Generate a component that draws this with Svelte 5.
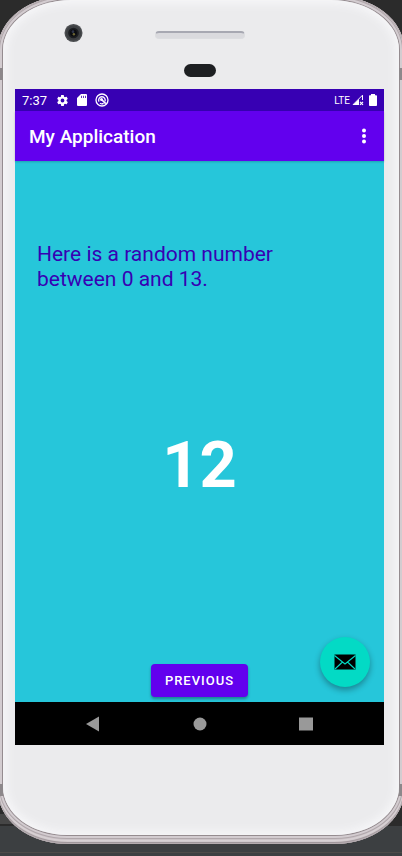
<script>
  const min = 0;
  const max = 13;
  let value = $state(12);

  function reroll() {
    value = min + Math.floor(Math.random() * (max - min + 1));
  }
</script>

<div class="desk">
  <div class="phone">
    <i class="antenna top left"></i>
    <i class="antenna top right"></i>
    <i class="antenna bottom left"></i>
    <i class="antenna bottom right"></i>
    <div class="face">
      <div class="forehead">
        <svg class="camera" viewBox="0 0 20 20" aria-hidden="true">
          <circle cx="10" cy="10" r="9.5" fill="#4b4d50" />
          <circle cx="10" cy="10" r="8" fill="#3d3f42" />
          <circle cx="10" cy="10" r="5.6" fill="#1b1d20" />
          <circle cx="10" cy="10" r="3.6" fill="#0b0c10" />
          <circle cx="9.4" cy="8.6" r="1.4" fill="#2d3348" />
          <circle cx="10.4" cy="11.4" r="1.3" fill="#6c6535" />
        </svg>
        <div class="speaker"></div>
        <div class="sensor"></div>
      </div>

      <div class="screen">
        <div class="status">
          <span class="clock">7:37</span>
          <svg class="gear" viewBox="0 0 24 24" aria-hidden="true">
            <path fill="#fff" fill-rule="evenodd" d="M19.4 13c0-.3.1-.6.1-1s0-.7-.1-1l2.1-1.600c.2-.2.3-.5.1-.7l-2-3.500c-.1-.2-.4-.3-.6-.2l-2.500 1c-.5-.4-1.100-.7-1.700-1l-.4-2.600c0-.3-.2-.4-.5-.4h-4c-.2 0-.4.2-.5.4L9 5c-.6.300-1.200.600-1.700 1L4.900 5c-.2-.1-.5 0-.6.200l-2 3.500c-.1.2-.1.5.1.7L4.500 11c0 .3-.1.700-.1 1s0 .7.100 1l-2.100 1.600c-.2.200-.3.500-.1.700l2 3.500c.1.200.4.300.6.200l2.500-1c.5.400 1.100.700 1.700 1l.4 2.600c0 .3.200.4.500.4h4c.2 0 .4-.2.500-.4L15 19c.6-.3 1.200-.600 1.700-1l2.400 1c.2.100.5 0 .6-.2l2-3.500c.1-.2.100-.5-.1-.7zM12 15.500a3.500 3.500 0 1 1 0-7 3.500 3.500 0 0 1 0 7z" />
          </svg>
          <svg class="card" viewBox="0 0 10 12" aria-hidden="true">
            <path fill="#fff" d="M4 0h5a1 1 0 0 1 1 1v10a1 1 0 0 1-1 1H1a1 1 0 0 1-1-1V4z" />
            <path stroke="#3700b3" stroke-width=".8" d="M4.500 1.800v2.200M6.500 1.800v2.200M8.500 1.800v2.200" />
          </svg>
          <svg class="data" viewBox="0 0 14 14" aria-hidden="true">
            <g fill="none" stroke="#fff">
              <circle cx="7" cy="7" r="6" stroke-width="1.300" />
              <path stroke-width="1.300" d="M4 8.600A3.300 3.300 0 1 1 9.900 8.500M5 10.200a3.300 3.300 0 0 0 3.600.2" />
              <path stroke-width="1.700" d="M6 6l4.800 4.600" />
            </g>
            <circle cx="6.500" cy="6.500" r="1.500" fill="#fff" />
          </svg>
          <span class="network">LTE</span>
          <svg class="signal" viewBox="0 0 12 12" aria-hidden="true">
            <path fill="none" stroke="#fff" d="M6.500 10.500H1.200L10.500 1.200V6" />
            <path fill="#fff" d="M1 11L7 5v6z" />
            <path stroke="#fff" stroke-width="1.200" d="M8 7.800l3 3M11 7.800l-3 3" />
          </svg>
          <svg class="battery" viewBox="0 0 8 12" aria-hidden="true">
            <path fill="#fff" d="M2 0h4v1.300h1.200q.8 0 .8.800v9q0 .9-.8.900H.8Q0 12 0 11.100v-9q0-.8.800-.8H2z" />
          </svg>
        </div>

        <header class="appbar">
          <h1>My Application</h1>
          <button class="more" aria-label="More options">
            <svg viewBox="0 0 6 16" aria-hidden="true">
              <g fill="#fff">
                <circle cx="3" cy="2.500" r="2" />
                <circle cx="3" cy="8" r="2" />
                <circle cx="3" cy="13.500" r="2" />
              </g>
            </svg>
          </button>
        </header>

        <main>
          <p class="message">Here is a random number between {min} and {max}.</p>
          <output class="number">{value}</output>
          <button class="previous">PREVIOUS</button>
          <button class="fab" aria-label="Send mail" onclick={reroll}>
            <svg viewBox="0 0 22 16" aria-hidden="true">
              <rect x=".5" y=".5" width="21" height="15" fill="#000" />
              <path fill="none" stroke="#03dac5" stroke-width="1.100" d="M.5 1.500L8.500 8 11 10l2.500-2L21.500 1.500M1 15l7.500-7M21 15l-7.500-7" />
            </svg>
          </button>
        </main>

        <nav>
          <button aria-label="Back">
            <svg viewBox="0 0 16 16" aria-hidden="true"><path fill="#999" d="M1 8L14 .5v15z" /></svg>
          </button>
          <button aria-label="Home">
            <svg viewBox="0 0 16 16" aria-hidden="true"><circle cx="8" cy="8" r="6.500" fill="#999" /></svg>
          </button>
          <button aria-label="Recent apps">
            <svg viewBox="0 0 16 16" aria-hidden="true"><path fill="#999" d="M1 1.500h14v13H1z" /></svg>
          </button>
        </nav>
      </div>
    </div>
  </div>
</div>

<style>
  :global(body) {
    margin: 0;
    background: #3c3f41;
  }

  .desk {
    box-sizing: border-box;
    display: flex;
    flex-direction: column;
    min-height: 100vh;
    padding-bottom: 12px;
    overflow: hidden;
    font-family: Roboto, "Liberation Sans", sans-serif;
    background:
      linear-gradient(#4d4a48, #4d4a48) 0 calc(100% - 3px) / 100% 1px no-repeat,
      linear-gradient(#3c3f41, #3c3f41) 0 100% / 100% 30px no-repeat,
      linear-gradient(#464646, #464646) 0 calc(100% - 32px) / 50% 10px no-repeat,
      #2b2b2b;
  }

  .phone {
    position: relative;
    box-sizing: border-box;
    display: flex;
    flex: 1;
    margin: -4px -2px 0;
    padding: 4px 5px 9px;
    border-radius: 70px / 53px;
    background: #cbc3c7;
    box-shadow:
      inset 0 0 0 1px #b5acb0,
      inset 0 -2px 1px #9b9296,
      inset 0 0 0 4px #d8d1d4;
  }

  .antenna {
    position: absolute;
    width: 5px;
    height: 12px;
    background: #8d888b;
  }

  .top {
    top: 72px;
  }

  .bottom {
    bottom: 48px;
  }

  .left {
    left: 0;
  }

  .right {
    right: 0;
  }

  .face {
    display: flex;
    flex: 1;
    flex-direction: column;
    padding: 0 15px 90px 12px;
    border-radius: 68px 68px 64px 64px / 50px 50px 48px 48px;
    background: #ebebed;
    box-shadow:
      0 0 0 1px #958c90,
      0 0 0 3px #d3ccd0,
      0 0 0 4px #b0a7ab,
      inset 0 0 8px 4px #f6f6f8;
  }

  .forehead {
    position: relative;
    display: flex;
    flex-direction: column;
    align-items: center;
    height: 89px;
  }

  .camera {
    position: absolute;
    top: 23px;
    left: 49px;
    width: 19px;
    height: 20px;
  }

  .speaker {
    box-sizing: border-box;
    width: 90px;
    height: 8px;
    margin: 31px 0 25px;
    border: 1px solid #dcdde0;
    border-top: 2px solid #a7a8b2;
    border-radius: 4px;
    background: #dadade;
  }

  .sensor {
    width: 32px;
    height: 13px;
    border-radius: 7px;
    background: #1d1f22;
  }

  .screen {
    display: flex;
    flex: 1;
    flex-direction: column;
    color: #fff;
    background: #26c6da;
  }

  button {
    display: flex;
    align-items: center;
    justify-content: center;
    padding: 0;
    border: 0;
    color: inherit;
    font: inherit;
    background: none;
    cursor: pointer;
  }

  .status {
    display: flex;
    align-items: center;
    height: 22px;
    padding: 0 7px;
    font-size: 13px;
    background: #3700b3;
  }

  .gear {
    width: 13px;
    height: 13px;
    margin-left: 9px;
  }

  .card {
    width: 10px;
    height: 12px;
    margin-left: 8px;
  }

  .data {
    width: 14px;
    height: 14px;
    margin-left: 8px;
  }

  .network {
    margin-left: auto;
    font-size: 10px;
  }

  .signal {
    width: 12px;
    height: 12px;
    margin-left: 2px;
  }

  .battery {
    width: 8px;
    height: 12px;
    margin-left: 5px;
  }

  .appbar {
    display: flex;
    align-items: center;
    justify-content: space-between;
    height: 50px;
    padding: 0 10px 0 14px;
    background: #6200ee;
    box-shadow: 0 1px 2px #0003;
  }

  h1 {
    margin: 0;
    font-size: 19px;
    font-weight: 500;
  }

  .more {
    width: 20px;
    height: 36px;
  }

  .more svg {
    width: 6px;
    height: 16px;
  }

  main {
    position: relative;
    display: flex;
    flex: 1;
    flex-direction: column;
    align-items: center;
    padding: 81px 22px 5px;
  }

  .message {
    align-self: stretch;
    max-width: 260px;
    margin: 0;
    color: #3700b3;
    font-size: 21px;
    line-height: 25px;
  }

  .number {
    margin: auto 0;
    padding-bottom: 26px;
    font-size: 65px;
    font-weight: 700;
    line-height: 76px;
  }

  .previous {
    width: 97px;
    height: 33px;
    border-radius: 4px;
    font-size: 13px;
    font-weight: 500;
    letter-spacing: 1px;
    background: #6200ee;
    box-shadow: 0 2px 3px #0005;
  }

  .fab {
    position: absolute;
    right: 14px;
    bottom: 15px;
    width: 50px;
    height: 50px;
    border-radius: 50%;
    background: #03dac5;
    box-shadow: 0 3px 6px #0005;
  }

  .fab svg {
    width: 22px;
    height: 16px;
  }

  nav {
    display: flex;
    align-items: center;
    justify-content: space-between;
    height: 43px;
    padding: 0 62px;
    background: #000;
  }

  nav button {
    width: 32px;
    height: 32px;
  }

  nav svg {
    width: 16px;
    height: 16px;
  }
</style>
